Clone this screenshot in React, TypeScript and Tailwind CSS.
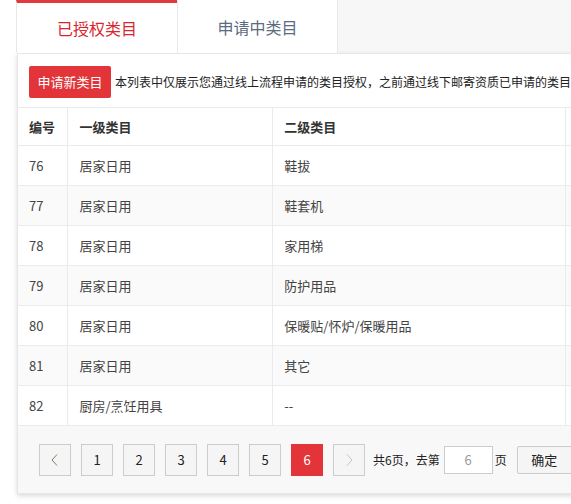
import React from "react";

const ROWS = [
    { id: 76, first: "居家日用", second: "鞋拔" },
    { id: 77, first: "居家日用", second: "鞋套机" },
    { id: 78, first: "居家日用", second: "家用梯" },
    { id: 79, first: "居家日用", second: "防护用品" },
    { id: 80, first: "居家日用", second: "保暖贴/怀炉/保暖用品" },
    { id: 81, first: "居家日用", second: "其它" },
    { id: 82, first: "厨房/烹饪用具", second: "--" },
];

const PAGES = [1, 2, 3, 4, 5, 6];

export default function App() {
    const current = 6;

    return (
        <div
            className="w-[571px] h-[504px] overflow-hidden bg-white text-[#333]"
            style={{ fontFamily: '"Noto Sans CJK SC", "Noto Sans", sans-serif' }}
        >
            <div className="pl-4 w-[700px]">
                {/* tabs */}
                <div className="flex h-[53px] bg-[#f7f7f7]">
                    <div className="w-[161px] bg-white border-t-[3px] border-[#e4393c] border-l border-l-[#e8e8e8] flex items-center justify-center text-[16px] text-[#d7262c]">
                        已授权类目
                    </div>
                    <div className="w-[161px] bg-white border-x border-[#e8e8e8] flex items-center justify-center text-[16px] text-[#5b6b80]">
                        申请中类目
                    </div>
                </div>

                {/* panel */}
                <div className="ml-px w-[640px] border border-[#e6e6e6] shadow-[0_2px_5px_rgba(0,0,0,0.15)] bg-white">
                    <div className="flex items-center gap-1 pl-[11px] pt-3 pb-[9px]">
                        <button className="h-8 w-[82px] rounded-[2px] bg-[#e33539] text-white text-[13px] shrink-0">
                            申请新类目
                        </button>
                        <span className="text-[12px] text-[#222] whitespace-nowrap">
                            本列表中仅展示您通过线上流程申请的类目授权，之前通过线下邮寄资质已申请的类目
                        </span>
                    </div>

                    <table className="border-collapse text-[13px] table-fixed">
                        <colgroup>
                            <col className="w-[50px]" />
                            <col className="w-[205px]" />
                            <col className="w-[293px]" />
                            <col className="w-[90px]" />
                        </colgroup>
                        <thead>
                            <tr className="h-[38px] bg-white">
                                <th className="border border-l-0 border-[#ebebeb] text-left font-semibold pl-[11px] text-[#333]">编号</th>
                                <th className="border border-[#ebebeb] text-left font-semibold pl-[11px] text-[#333]">一级类目</th>
                                <th className="border border-[#ebebeb] text-left font-semibold pl-[11px] text-[#333]">二级类目</th>
                                <th className="border border-[#ebebeb]"></th>
                            </tr>
                        </thead>
                        <tbody>
                            {ROWS.map((r, i) => (
                                <tr key={r.id} className={i % 2 === 1 ? "h-10 bg-[#fafafa]" : "h-10 bg-white"}>
                                    <td className="border border-l-0 border-[#ebebeb] pl-[11px] text-[#444]">{r.id}</td>
                                    <td className="border border-[#ebebeb] pl-[11px] text-[#444]">{r.first}</td>
                                    <td className="border border-[#ebebeb] pl-[11px] text-[#444]">{r.second}</td>
                                    <td className="border border-[#ebebeb]"></td>
                                </tr>
                            ))}
                        </tbody>
                    </table>

                    {/* pagination */}
                    <div className="h-[67px] bg-[#f8f8f8] flex items-center pl-[21px] text-[13px]">
                        <button className="w-8 h-8 border border-[#cccccc] bg-[#f5f5f5] flex items-center justify-center">
                            <svg width="10" height="14" viewBox="0 0 10 14" fill="none">
                                <path d="M7 1.5 L2 7 L7 12.5" stroke="#8a7a66" strokeWidth="1" />
                            </svg>
                        </button>
                        {PAGES.map((p) => (
                            <button
                                key={p}
                                className={
                                    p === current
                                        ? "ml-[10px] w-8 h-8 bg-[#e33539] text-white flex items-center justify-center"
                                        : "ml-[10px] w-8 h-8 border border-[#cccccc] bg-[#f5f5f5] text-[#222] flex items-center justify-center"
                                }
                            >
                                {p}
                            </button>
                        ))}
                        <button className="ml-[10px] w-8 h-8 border border-[#cccccc] bg-[#f5f5f5] flex items-center justify-center">
                            <svg width="10" height="14" viewBox="0 0 10 14" fill="none">
                                <path d="M3 1.5 L8 7 L3 12.5" stroke="#c4c4c4" strokeWidth="1" />
                            </svg>
                        </button>
                        <span className="ml-2 text-[12px] text-[#222]">共6页，去第</span>
                        <input
                            defaultValue="6"
                            className="ml-[4px] w-[49px] h-7 border border-[#cccccc] bg-white text-center text-[#999] text-[13px] outline-none"
                        />
                        <span className="ml-[2px] text-[12px] text-[#222]">页</span>
                        <button className="ml-[10px] w-[55px] h-7 border border-[#cccccc] rounded-[2px] bg-[#f5f5f5] text-[#222] text-[13px]">
                            确定
                        </button>
                    </div>
                </div>
            </div>
        </div>
    );
}
